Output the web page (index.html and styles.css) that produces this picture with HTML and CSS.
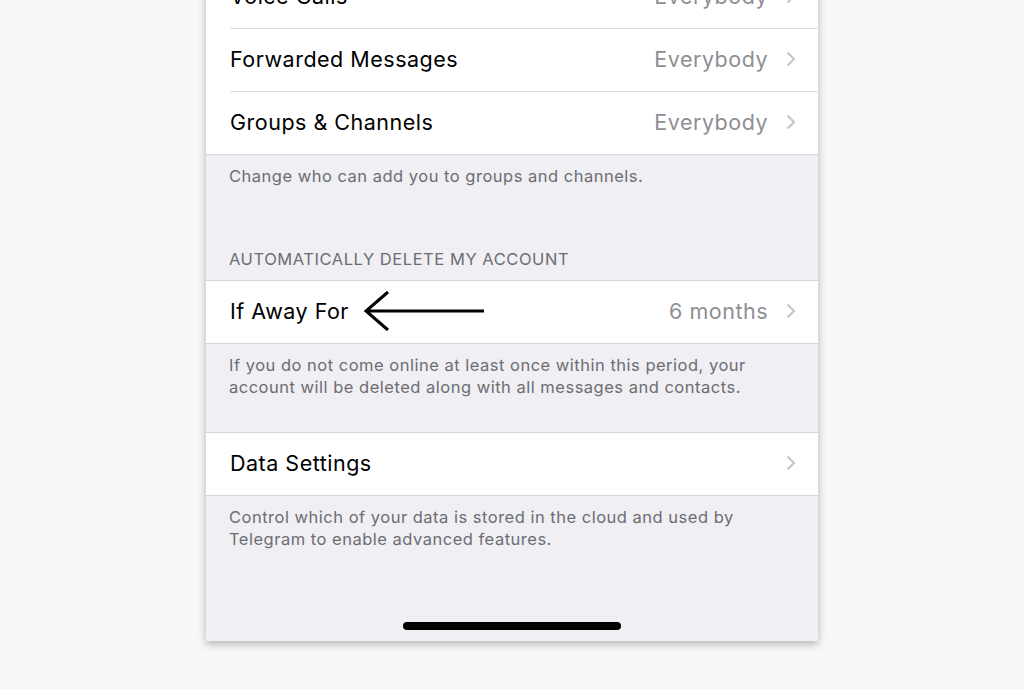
FILE: index.html
```html
<html lang="en">
<head>
    <meta charset="UTF-8">
    <meta name="viewport" content="width=device-width, initial-scale=1.0">
    <link rel="stylesheet" href="styles.css">
</head>
<body>
    <div class="screen">
        <div class="group first">
            <div class="row">
                <span class="label">Voice Calls</span>
                <span class="value">Everybody</span>
                <svg class="chevron" viewBox="0 0 10 16"><path d="M1.5 1.5 L8 8 L1.5 14.5"/></svg>
            </div>
            <div class="row">
                <span class="label">Forwarded Messages</span>
                <span class="value">Everybody</span>
                <svg class="chevron" viewBox="0 0 10 16"><path d="M1.5 1.5 L8 8 L1.5 14.5"/></svg>
            </div>
            <div class="row">
                <span class="label">Groups &amp; Channels</span>
                <span class="value">Everybody</span>
                <svg class="chevron" viewBox="0 0 10 16"><path d="M1.5 1.5 L8 8 L1.5 14.5"/></svg>
            </div>
        </div>
        <p class="footer">Change who can add you to groups and channels.</p>

        <p class="header">AUTOMATICALLY DELETE MY ACCOUNT</p>
        <div class="group">
            <div class="row">
                <span class="label">If Away For</span>
                <svg class="arrow" viewBox="0 0 122 42"><path d="M2 21 H120 M24 2 L2 21 L24 40"/></svg>
                <span class="value">6 months</span>
                <svg class="chevron" viewBox="0 0 10 16"><path d="M1.5 1.5 L8 8 L1.5 14.5"/></svg>
            </div>
        </div>
        <p class="footer">If you do not come online at least once within this period, your account will be deleted along with all messages and contacts.</p>

        <div class="group spaced">
            <div class="row">
                <span class="label">Data Settings</span>
                <span class="value"></span>
                <svg class="chevron" viewBox="0 0 10 16"><path d="M1.5 1.5 L8 8 L1.5 14.5"/></svg>
            </div>
        </div>
        <p class="footer">Control which of your data is stored in the cloud and used by Telegram to enable advanced features.</p>

        <div class="home-bar"></div>
    </div>
</body>
</html>
```

FILE: styles.css
```css
body {
    margin: 0;
    background-color: #f8f8f8;
    font-family: Inter, "Noto Sans", sans-serif;
    overflow: hidden;
}
.screen {
    width: 612px;
    height: 675px;
    margin: -34px auto 0 auto;
    background-color: #efeff4;
    box-shadow: 0 3px 8px rgba(0, 0, 0, 0.28);
    display: flex;
    flex-direction: column;
}
.group {
    background-color: #fff;
    border-top: 1px solid #d6d6da;
    border-bottom: 1px solid #d6d6da;
}
.group.first {
    border-top: none;
}
.group.spaced {
    margin-top: 34px;
}
.row {
    display: flex;
    align-items: center;
    height: 60px;
    padding-bottom: 2px;
    margin-left: 24px;
    padding-right: 22px;
    border-bottom: 1px solid #dcdce0;
}
.row:last-child {
    border-bottom: none;
}
.label {
    font-size: 21.5px;
    color: #000;
    letter-spacing: 0.5px;
}
.value {
    margin-left: auto;
    font-size: 21.5px;
    color: #8e8e93;
    letter-spacing: 0.5px;
}
.chevron {
    width: 10px;
    height: 16px;
    margin-left: 18px;
    fill: none;
    stroke: #c4c4c8;
    stroke-width: 2;
}
.arrow {
    width: 122px;
    height: 42px;
    margin-left: 15px;
    fill: none;
    stroke: #000;
    stroke-width: 3;
}
.footer {
    margin: 0;
    padding: 10px 60px 0 23px;
    font-size: 16.5px;
    line-height: 22px;
    color: #6d6d72;
    letter-spacing: 0.5px;
}
.header {
    margin: 61px 0 0 0;
    padding: 0 0 10px 23px;
    font-size: 16.5px;
    line-height: 22px;
    color: #6d6d72;
    letter-spacing: 0.55px;
}
.home-bar {
    width: 218px;
    height: 8px;
    margin: auto auto 11px auto;
    border-radius: 4px;
    background-color: #000;
}
```
